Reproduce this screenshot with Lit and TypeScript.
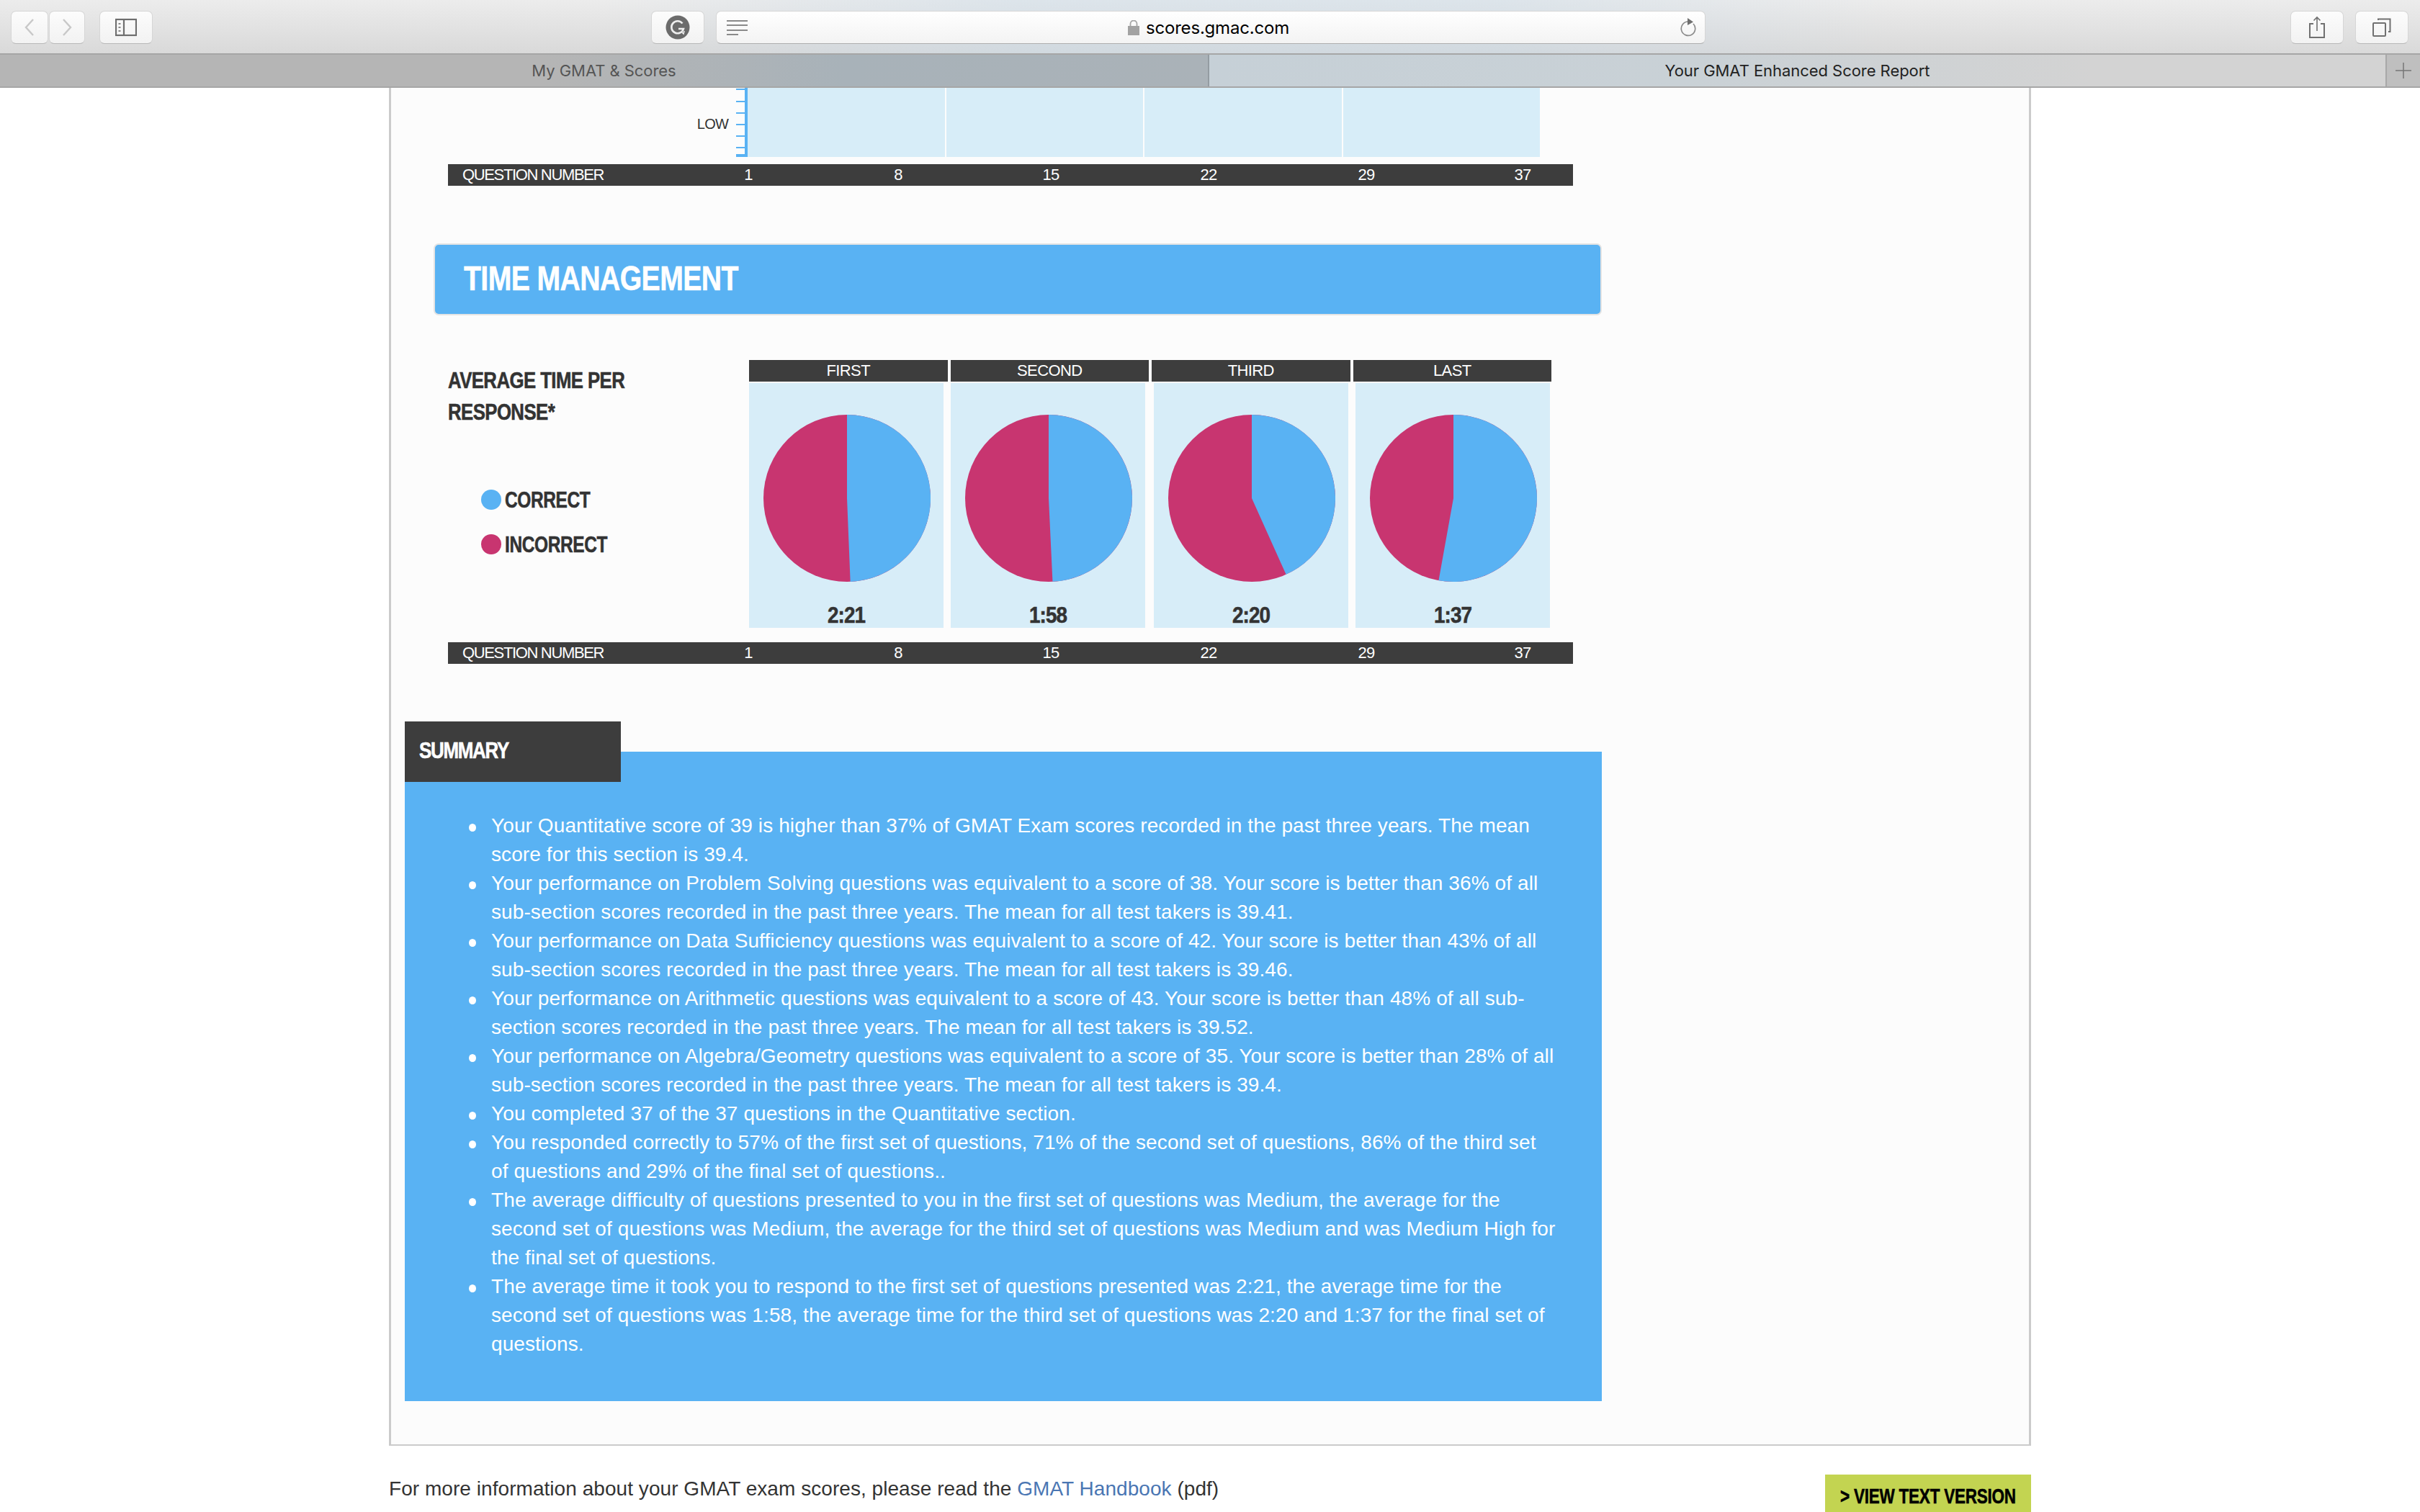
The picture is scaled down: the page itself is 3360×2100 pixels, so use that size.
import { LitElement, html, css, svg } from "lit";
import { customElement } from "lit/decorators.js";

const TICKS = ["1", "8", "15", "22", "29", "37"];
const PIES = [
  { head: "FIRST", blueEnd: 177.7, time: "2:21" },
  { head: "SECOND", blueEnd: 177.3, time: "1:58" },
  { head: "THIRD", blueEnd: 155.8, time: "2:20" },
  { head: "LAST", blueEnd: 190.2, time: "1:37" },
];
const SUMMARY: string[][] = [
  ["Your Quantitative score of 39 is higher than 37% of GMAT Exam scores recorded in the past three years. The mean", "score for this section is 39.4."],
  ["Your performance on Problem Solving questions was equivalent to a score of 38. Your score is better than 36% of all", "sub-section scores recorded in the past three years. The mean for all test takers is 39.41."],
  ["Your performance on Data Sufficiency questions was equivalent to a score of 42. Your score is better than 43% of all", "sub-section scores recorded in the past three years. The mean for all test takers is 39.46."],
  ["Your performance on Arithmetic questions was equivalent to a score of 43. Your score is better than 48% of all sub-", "section scores recorded in the past three years. The mean for all test takers is 39.52."],
  ["Your performance on Algebra/Geometry questions was equivalent to a score of 35. Your score is better than 28% of all", "sub-section scores recorded in the past three years. The mean for all test takers is 39.4."],
  ["You completed 37 of the 37 questions in the Quantitative section."],
  ["You responded correctly to 57% of the first set of questions, 71% of the second set of questions, 86% of the third set", "of questions and 29% of the final set of questions.."],
  ["The average difficulty of questions presented to you in the first set of questions was Medium, the average for the", "second set of questions was Medium, the average for the third set of questions was Medium and was Medium High for", "the final set of questions."],
  ["The average time it took you to respond to the first set of questions presented was 2:21, the average time for the", "second set of questions was 1:58, the average time for the third set of questions was 2:20 and 1:37 for the final set of", "questions."],
];

function pie(blueEnd: number) {
  const r = 116;
  const a = (blueEnd * Math.PI) / 180;
  const x = r + r * Math.sin(a);
  const y = r - r * Math.cos(a);
  const large = blueEnd > 180 ? 1 : 0;
  return html`<svg class="pie" width="232" height="232" viewBox="0 0 232 232">
    <circle cx="116" cy="116" r="116" fill="#c83570"></circle>
    ${svg`<path d="M116 116 L116 0 A116 116 0 ${large} 1 ${x.toFixed(2)} ${y.toFixed(2)} Z" fill="#59b2f3"></path>`}
  </svg>`;
}

@customElement("app-root")
export class AppRoot extends LitElement {
  static styles = css`
    :host { display: block; width: 3360px; height: 2100px; overflow: hidden; background: #fff; font-family: "Liberation Sans", Arial, sans-serif; }
    * { box-sizing: border-box; }

    .toolbar { height: 74px; display: flex; align-items: flex-start; padding: 15px 16px 0 15px;
      background: linear-gradient(90deg, rgba(255,255,255,0) 25%, rgba(196,216,232,.38) 42%, rgba(196,216,232,.38) 62%, rgba(255,255,255,0) 78%), linear-gradient(180deg, #ececec, #d9d9d9); }
    .btn { height: 46px; display: flex; align-items: center; justify-content: center; border-radius: 7px;
      background: linear-gradient(180deg, #fcfcfc, #f2f2f2); border: 1px solid #d6d6d6; border-bottom-color: #b8b8b8; }
    .b-nav { width: 52px; }
    .b-nav2 { width: 50px; margin-left: 1px; }
    .b-side { width: 74px; margin-left: 20px; }
    .b-g { width: 74px; margin-left: 692px; }
    .addr { width: 1374px; height: 46px; margin-left: 16px; display: flex; align-items: center; padding: 0 12px 0 14px; border-radius: 7px;
      background: linear-gradient(180deg, #fff, #f3f3f3); border: 1px solid #d6d6d6; border-bottom-color: #aeaeae; }
    .url { flex: 1; display: flex; align-items: center; justify-content: center; gap: 9px; font: 400 24px Inter, "Liberation Sans", sans-serif; color: #000; letter-spacing: -.2px; margin-right: 14px; }
    .b-share { width: 74px; margin-left: 812px; }
    .b-tabs { width: 74px; margin-left: 16px; }

    .tabs { height: 48px; display: flex; border-top: 2px solid #a6a6a6; border-bottom: 2px solid #a6a6a6; font: 400 22px Inter, "Liberation Sans", sans-serif; }
    .tab { display: flex; align-items: center; justify-content: center; letter-spacing: -.05px; }
    .t-off { width: 1679px; color: #555; background: linear-gradient(90deg, #b5b5b5 45%, #a8b2b9 70%, #aab2b8); border-right: 2px solid #949ca2; }
    .t-on { width: 1633px; color: #222; background: linear-gradient(90deg, #c6d0d7, #c9d1d6 40%, #d3d3d3 75%, #d3d3d3); }
    .t-new { flex: 1; display: flex; align-items: center; justify-content: center; background: #bfbfbf; border-left: 2px solid #a8a8a8; }

    .box { margin-left: 540px; width: 2280px; height: 1886px; border: solid #cbcbcb; border-width: 0 3px 2px 3px; background: #fcfcfc; }
    .strip { display: flex; height: 96px; }
    .low { width: 479px; display: flex; justify-content: flex-end; align-items: center; padding: 4px 11px 0 0; font-size: 20px; letter-spacing: -.8px; color: #333; }
    .axis { display: block; }
    .plot { display: flex; gap: 2px; width: 1100px; }
    .plot div { flex: 1; background: #d7edf8; height: 96px; }

    .qbar { margin: 10px 0 0 79px; width: 1562px; height: 30px; background: #3d3d3d; color: #fff; display: flex; align-items: center; font-size: 22px; letter-spacing: -1.35px; }
    .qbar.second { margin-top: 20px; }
    .qlabel { width: 377px; padding-left: 20px; white-space: nowrap; }
    .qn { width: 80px; text-align: center; letter-spacing: -.8px; }
    .qn:nth-child(3) { margin-left: 128px; }
    .qn:nth-child(4) { margin-left: 132px; }
    .qn:nth-child(5) { margin-left: 139px; }
    .qn:nth-child(6) { margin-left: 139px; }
    .qn:nth-child(7) { margin-left: 137px; }

    .cond { font-weight: 700; white-space: nowrap; -webkit-text-stroke: .6px currentColor; }
    .nar { display: inline-block; transform-origin: left center; white-space: nowrap; }

    .band { margin: 80px 0 0 59px; width: 1622px; height: 100px; background: #59b2f3; border: 2px solid #e4e4e4; border-radius: 7px; color: #fff; display: flex; align-items: center; padding: 0 0 4px 40px; font-size: 49px; letter-spacing: -.75px; }
    .band .nar { transform: scaleX(.8); }

    .times { display: flex; margin: 62px 0 0 79px; }
    .side { width: 418px; color: #333; }
    .title { padding-top: 6px; font-size: 32px; line-height: 44px; letter-spacing: -.7px; }
    .title .nar { transform: scaleX(.805); }
    .legend { margin-top: 69px; padding-left: 46px; font-size: 32px; letter-spacing: -.5px; }
    .legend .nar { transform: scaleX(.765); }
    .lrow { height: 62px; display: flex; align-items: center; gap: 5px; }
    .dot { width: 28px; height: 28px; border-radius: 50%; }
    .d-b { background: #59b2f3; }
    .d-p { background: #c83570; }
    .charts { width: 1114px; }
    .heads { display: grid; grid-template-columns: repeat(4, 1fr); gap: 4px; }
    .head { height: 30px; background: #3d3d3d; color: #fff; font-size: 22px; letter-spacing: -.6px; display: flex; align-items: center; justify-content: center; }
    .panels { display: flex; gap: 10px; margin-top: 2px; }
    .panel { width: 270px; height: 340px; background: #d7edf8; }
    .panel:nth-child(3) { margin-left: 2px; }
    .pie { display: block; margin: 44px 0 0 20px; }
    .time { margin-top: 28px; text-align: center; font-size: 32px; line-height: 36px; color: #333; letter-spacing: -1px; }
    .time .nar { transform: scaleX(.87); transform-origin: center; }

    .sum { margin: 80px 0 0 19px; width: 1662px; }
    .stab { position: relative; width: 300px; height: 84px; background: #3d3d3d; color: #fff; display: flex; align-items: center; padding: 0 0 3px 20px; font-size: 32px; letter-spacing: -1.6px; margin-bottom: -42px; }
    .stab .nar { transform: scaleX(.81); }
    .spanel { background: #59b2f3; color: #fff; padding: 83px 0 59px 120px; height: 902px; }
    ul { margin: 0; padding: 0; list-style: none; font-size: 28px; line-height: 40px; letter-spacing: .1px; white-space: nowrap; }
    li { position: relative; }
    li::before { content: ""; position: absolute; left: -31px; top: 17px; width: 10px; height: 11px; border-radius: 50%; background: #fff; }

    .foot { margin-left: 540px; width: 2280px; margin-top: 40px; display: flex; justify-content: space-between; align-items: flex-start; }
    .ftext { font-size: 28px; line-height: 40px; color: #333; letter-spacing: .05px; }
    .ftext a { color: #4a76b3; text-decoration: none; }
    .viewbtn { width: 286px; height: 60px; background: #c3d451; color: #000; padding-left: 21px; line-height: 60px; font-size: 30px; letter-spacing: -.3px; }
    .viewbtn .nar { transform: scaleX(.75); }
  `;

  private qbar(second = false) {
    return html`<div class="qbar ${second ? "second" : ""}"><div class="qlabel">QUESTION NUMBER</div>${TICKS.map((t) => html`<div class="qn">${t}</div>`)}</div>`;
  }

  render() {
    return html`
      <div class="toolbar">
        <div class="btn b-nav"><svg width="16" height="26" viewBox="0 0 16 26"><path d="M13 2 L3 13 L13 24" fill="none" stroke="#c8c8c8" stroke-width="2.4"/></svg></div>
        <div class="btn b-nav2"><svg width="16" height="26" viewBox="0 0 16 26"><path d="M3 2 L13 13 L3 24" fill="none" stroke="#c8c8c8" stroke-width="2.4"/></svg></div>
        <div class="btn b-side"><svg width="30" height="26" viewBox="0 0 30 26"><rect x="1" y="2" width="28" height="22" fill="none" stroke="#6e6e6e" stroke-width="2.2"/><path d="M12 2 V24" stroke="#6e6e6e" stroke-width="2.2"/><path d="M6 7 V9 M6 12 V14 M6 17 V19" stroke="#8a8a8a" stroke-width="3"/></svg></div>
        <div class="btn b-g"><svg width="34" height="34" viewBox="0 0 34 34"><circle cx="17" cy="17" r="16.5" fill="#6b6b6b"/><path d="M23.5 11.5 A8.5 8.5 0 1 0 25 19 H18" fill="none" stroke="#eee" stroke-width="2.6"/><path d="M22 23 L25 26 L26 22" fill="none" stroke="#eee" stroke-width="1.6"/></svg></div>
        <div class="addr">
          <svg width="30" height="22" viewBox="0 0 30 22"><path d="M0 2 H29 M0 8 H29 M0 15 H29 M0 21 H16" stroke="#8a8a8a" stroke-width="2.2"/></svg>
          <div class="url">
            <svg width="16" height="21" viewBox="0 0 16 21"><path d="M3.5 8 V5 A4.5 4.5 0 0 1 12.5 5 V8" fill="none" stroke="#a6a6a6" stroke-width="1.8"/><rect x="0" y="8" width="16" height="13" fill="#a2a2a2"/></svg>
            <span>scores.gmac.com</span>
          </div>
          <svg width="24" height="26" viewBox="0 0 24 26"><path d="M13 5 A9.7 9.7 0 1 0 20 8" fill="none" stroke="#8c8c8c" stroke-width="1.7"/><path d="M12 0 L20 5.5 L12 10 Z" fill="#6f6f6f"/></svg>
        </div>
        <div class="btn b-share"><svg width="24" height="32" viewBox="0 0 24 32"><path d="M7 11 H2 V30 H22 V11 H17" fill="none" stroke="#707070" stroke-width="2"/><path d="M12 2 V21 M7.5 6.5 L12 2 L16.5 6.5" fill="none" stroke="#707070" stroke-width="1.6"/></svg></div>
        <div class="btn b-tabs"><svg width="26" height="26" viewBox="0 0 26 26"><rect x="1" y="7" width="17" height="18" rx="1" fill="none" stroke="#707070" stroke-width="2"/><path d="M8 3 V1.5 H24.5 V19 H22" fill="none" stroke="#707070" stroke-width="2"/></svg></div>
      </div>
      <div class="tabs">
        <div class="tab t-off">My GMAT &amp; Scores</div>
        <div class="tab t-on">Your GMAT Enhanced Score Report</div>
        <div class="t-new"><svg width="22" height="22" viewBox="0 0 22 22"><path d="M0 11 H22 M11 0 V22" stroke="#777" stroke-width="1.5"/></svg></div>
      </div>

      <div class="box">
        <div class="strip">
          <div class="low">LOW</div>
          <svg class="axis" width="16" height="96" viewBox="0 0 16 96"><path d="M14 0 V96" stroke="#59b2f3" stroke-width="4"/><path d="M0 2 H14 M0 19 H14 M0 35 H14 M0 51 H14 M0 67 H14 M0 83 H14" stroke="#59b2f3" stroke-width="2"/><path d="M0 94 H14" stroke="#59b2f3" stroke-width="4"/></svg>
          <div class="plot"><div></div><div></div><div></div><div></div></div>
        </div>
        ${this.qbar()}
        <div class="band cond"><span class="nar">TIME MANAGEMENT</span></div>
        <div class="times">
          <div class="side cond">
            <div class="title"><span class="nar">AVERAGE TIME PER<br>RESPONSE*</span></div>
            <div class="legend">
              <div class="lrow"><span class="dot d-b"></span><span class="nar">CORRECT</span></div>
              <div class="lrow"><span class="dot d-p"></span><span class="nar">INCORRECT</span></div>
            </div>
          </div>
          <div class="charts">
            <div class="heads">${PIES.map((p) => html`<div class="head">${p.head}</div>`)}</div>
            <div class="panels">${PIES.map((p) => html`<div class="panel">${pie(p.blueEnd)}<div class="time cond"><span class="nar">${p.time}</span></div></div>`)}</div>
          </div>
        </div>
        ${this.qbar(true)}
        <div class="sum">
          <div class="stab cond"><span class="nar">SUMMARY</span></div>
          <div class="spanel">
            <ul>${SUMMARY.map((lines) => html`<li>${lines.map((l, i) => html`${i ? html`<br>` : ""}${l}`)}</li>`)}</ul>
          </div>
        </div>
      </div>
      <div class="foot">
        <div class="ftext">For more information about your GMAT exam scores, please read the <a href="#">GMAT Handbook</a> (pdf)</div>
        <div class="viewbtn cond"><span class="nar">&gt; VIEW TEXT VERSION</span></div>
      </div>
    `;
  }
}
